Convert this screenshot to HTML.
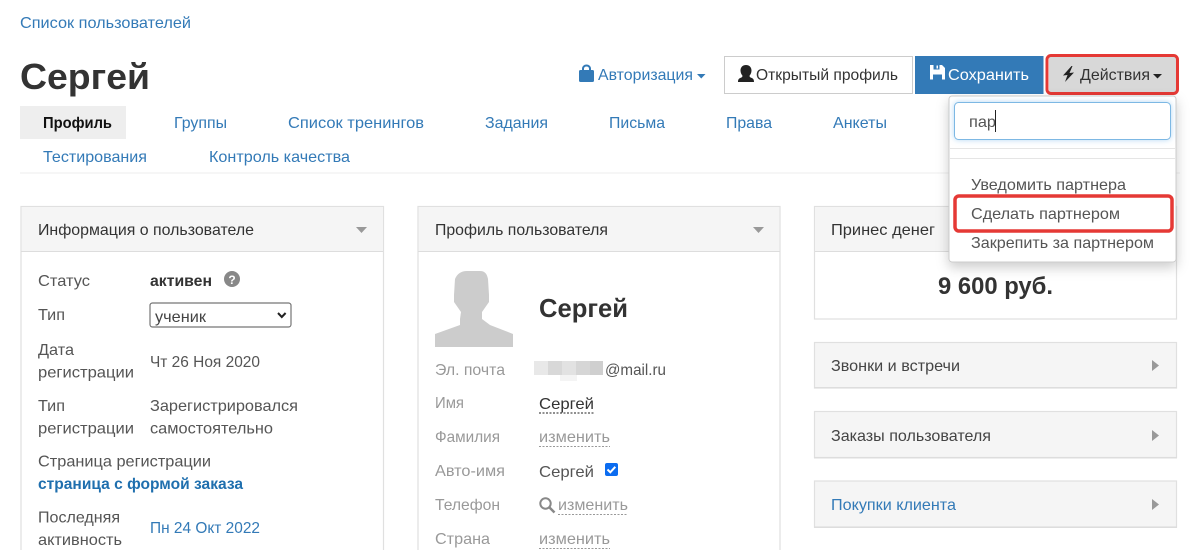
<!DOCTYPE html>
<html lang="ru">
<head>
<meta charset="utf-8">
<title>Сергей</title>
<style>
html,body{margin:0;padding:0;background:#fff;width:1200px;height:550px;overflow:hidden}
svg{display:block}
text{font-family:"Liberation Sans","Noto Sans CJK SC",sans-serif;font-size:16px;fill:#333}
.b{fill:#337ab7}
.g{fill:#999}
.s{fill:#555}
.w{font-weight:bold}
.p{stroke:#e0e0e0;stroke-width:1.2}
</style>
</head>
<body>
<svg width="1200" height="550" viewBox="0 0 1200 550" xmlns="http://www.w3.org/2000/svg">
<defs>
<filter id="sh" x="-20%" y="-20%" width="140%" height="150%"><feDropShadow dx="0" dy="5" stdDeviation="6" flood-color="#000" flood-opacity=".2"/></filter>
<filter id="gl" x="-10%" y="-30%" width="120%" height="160%"><feDropShadow dx="0" dy="0" stdDeviation="3" flood-color="#66afe9" flood-opacity=".5"/></filter>
</defs>

<text x="20" y="28" textLength="171" lengthAdjust="spacingAndGlyphs" class="b">Список пользователей</text>
<text x="20" y="89" textLength="130" lengthAdjust="spacingAndGlyphs" class="w" style="font-size:36px">Сергей</text>

<!-- tabs -->
<rect x="20" y="106" width="106" height="33" fill="#eee"/>
<text x="43" y="128" textLength="69" lengthAdjust="spacingAndGlyphs" class="w" style="fill:#111">Профиль</text>
<text x="174" y="128" textLength="53" lengthAdjust="spacingAndGlyphs" class="b">Группы</text>
<text x="288" y="128" textLength="136" lengthAdjust="spacingAndGlyphs" class="b">Список тренингов</text>
<text x="485" y="128" textLength="63" lengthAdjust="spacingAndGlyphs" class="b">Задания</text>
<text x="609" y="128" textLength="56" lengthAdjust="spacingAndGlyphs" class="b">Письма</text>
<text x="726" y="128" textLength="46" lengthAdjust="spacingAndGlyphs" class="b">Права</text>
<text x="833" y="128" textLength="54" lengthAdjust="spacingAndGlyphs" class="b">Анкеты</text>
<text x="43" y="162" textLength="104" lengthAdjust="spacingAndGlyphs" class="b">Тестирования</text>
<text x="209" y="162" textLength="141" lengthAdjust="spacingAndGlyphs" class="b">Контроль качества</text>
<rect x="20" y="172.500" width="1160" height="1" fill="#eee"/>

<!-- top actions -->
<path d="M579 71.500a1.500 1.500 0 0 1 1.500-1.500h12a1.500 1.500 0 0 1 1.500 1.500v9a1.500 1.500 0 0 1-1.500 1.500h-12a1.500 1.500 0 0 1-1.500-1.500z" fill="#337ab7"/>
<path d="M583 71v-2.500a3.500 3 0 0 1 7 0v2.500" fill="none" stroke="#337ab7" stroke-width="2"/>
<text x="598" y="80" textLength="95" lengthAdjust="spacingAndGlyphs" class="b">Авторизация</text>
<path d="M697 74h8.500l-4.250 4.500z" fill="#337ab7"/>

<rect x="724.500" y="56.500" width="188" height="37" fill="#fff" stroke="#ccc"/>
<path d="M746 65c3.300 0 5.500 2.300 5.500 5.500 0 2.300-1 4-2 5.200 0 1.300 1 1.800 2.300 2.300 1.300.5 2.200 1.500 2.200 4h-16c0-2.500.9-3.500 2.200-4 1.300-.5 2.300-1 2.300-2.300-1-1.200-2-2.900-2-5.200 0-3.200 2.200-5.500 5.500-5.500z" fill="#222"/>
<text x="756" y="80" textLength="142" lengthAdjust="spacingAndGlyphs" style="fill:#333">Открытый профиль</text>

<rect x="915" y="56" width="128.500" height="38" fill="#337ab7"/>
<path d="M930 65h12l3 3v11.500h-15z" fill="#fff"/>
<rect x="933.500" y="65" width="6" height="4.500" fill="#337ab7"/><rect x="936.500" y="65.500" width="1.500" height="3" fill="#fff"/>
<rect x="933" y="74.500" width="9" height="5" fill="#337ab7"/>
<text x="948" y="80" textLength="81" lengthAdjust="spacingAndGlyphs" style="fill:#fff">Сохранить</text>

<rect x="1049" y="57" width="127" height="35" fill="#d8d8d8"/>
<path d="M1071.500 66L1063 75.500l4.500-.5-2.500 7 9-9.500-4.500.5 3-7z" fill="#222"/>
<text x="1080" y="80" textLength="70" lengthAdjust="spacingAndGlyphs" style="fill:#333">Действия</text>
<path d="M1153 74h9l-4.500 4.500z" fill="#222"/>
<rect x="1047" y="55.500" width="130.500" height="38" rx="4" fill="none" stroke="#e53935" stroke-width="3"/>

<!-- left panel -->
<rect x="21" y="206.500" width="362.500" height="360" fill="#fff" class="p"/>
<rect x="21.500" y="207" width="361.500" height="44" fill="#f5f5f5"/>
<rect x="21" y="251" width="362" height="1" fill="#ddd"/>
<text x="38" y="235" textLength="216" lengthAdjust="spacingAndGlyphs">Информация о пользователе</text>
<path d="M356 227h11l-5.500 6z" fill="#999"/>
<text x="38" y="286" textLength="52" lengthAdjust="spacingAndGlyphs" class="s">Статус</text>
<text x="150" y="286" textLength="62" lengthAdjust="spacingAndGlyphs" class="w">активен</text>
<circle cx="232" cy="279" r="8" fill="#888"/>
<text x="232" y="284" text-anchor="middle" class="w" style="font-size:12px;fill:#fff">?</text>
<text x="38" y="320" textLength="27" lengthAdjust="spacingAndGlyphs" class="s">Тип</text>
<rect x="150" y="303" width="141" height="24" rx="2.500" fill="#fff" stroke="#767676" stroke-width="1.200"/>
<text x="155" y="322" textLength="51" lengthAdjust="spacingAndGlyphs" style="fill:#444">ученик</text>
<path d="M278 313l3.800 4 3.800-4" fill="none" stroke="#222" stroke-width="2"/>
<text x="38" y="355" textLength="36" lengthAdjust="spacingAndGlyphs" class="s">Дата</text>
<text x="38" y="377.500" textLength="96" lengthAdjust="spacingAndGlyphs" class="s">регистрации</text>
<text x="150" y="367" textLength="110" lengthAdjust="spacingAndGlyphs" class="s">Чт 26 Ноя 2020</text>
<text x="38" y="411" textLength="27" lengthAdjust="spacingAndGlyphs" class="s">Тип</text>
<text x="38" y="433.500" textLength="96" lengthAdjust="spacingAndGlyphs" class="s">регистрации</text>
<text x="150" y="411" textLength="148" lengthAdjust="spacingAndGlyphs" class="s">Зарегистрировался</text>
<text x="150" y="433.500" textLength="123" lengthAdjust="spacingAndGlyphs" class="s">самостоятельно</text>
<text x="38" y="466.500" textLength="173" lengthAdjust="spacingAndGlyphs" class="s">Страница регистрации</text>
<text x="38" y="489" textLength="205" lengthAdjust="spacingAndGlyphs" class="w" style="fill:#1f6fae">страница с формой заказа</text>
<text x="38" y="522.500" textLength="82" lengthAdjust="spacingAndGlyphs" class="s">Последняя</text>
<text x="38" y="545" textLength="84" lengthAdjust="spacingAndGlyphs" class="s">активность</text>
<text x="150" y="533" textLength="110" lengthAdjust="spacingAndGlyphs" class="b">Пн 24 Окт 2022</text>

<!-- middle panel -->
<rect x="418" y="206.500" width="362" height="360" fill="#fff" class="p"/>
<rect x="418.500" y="207" width="361" height="44" fill="#f5f5f5"/>
<rect x="418" y="251" width="362" height="1" fill="#ddd"/>
<text x="435" y="235" textLength="173" lengthAdjust="spacingAndGlyphs">Профиль пользователя</text>
<path d="M753 227h11l-5.500 6z" fill="#999"/>
<path d="M435 347v-13l25-9v-6l1-7-7-10v-7l1-16c2-5 6-8 12-8h13c5 0 7 3 8 8l1 16v7l-7 10v7l8 6 23 9v13z" fill="#ccc"/>
<text x="539" y="317" textLength="89" lengthAdjust="spacingAndGlyphs" class="w" style="font-size:26px">Сергей</text>
<text x="435" y="375" textLength="70" lengthAdjust="spacingAndGlyphs" class="g">Эл. почта</text>
<g>
<rect x="534" y="361" width="14" height="14" fill="#e8e8e8"/><rect x="548" y="361" width="14" height="14" fill="#d8d8d8"/><rect x="562" y="361" width="14" height="14" fill="#e2e2e2"/><rect x="576" y="361" width="14" height="14" fill="#d6d6d6"/><rect x="590" y="361" width="13" height="14" fill="#cfcfcf"/><rect x="560" y="375" width="17" height="6" fill="#f4f4f4"/>
</g>
<text x="605" y="375" textLength="61" lengthAdjust="spacingAndGlyphs" class="s">@mail.ru</text>
<text x="435" y="408" textLength="29" lengthAdjust="spacingAndGlyphs" class="g">Имя</text>
<text x="539" y="409" textLength="55" lengthAdjust="spacingAndGlyphs">Сергей</text>
<path d="M539 413h55" stroke="#222" stroke-dasharray="2 1.500" fill="none"/>
<text x="435" y="442" textLength="65" lengthAdjust="spacingAndGlyphs" class="g">Фамилия</text>
<text x="539" y="442" textLength="71" lengthAdjust="spacingAndGlyphs" class="g">изменить</text>
<path d="M539 446.500h71" stroke="#999" stroke-dasharray="2 1.500" fill="none"/>
<text x="435" y="476" textLength="70" lengthAdjust="spacingAndGlyphs" class="g">Авто-имя</text>
<text x="539" y="477" textLength="55" lengthAdjust="spacingAndGlyphs" class="s">Сергей</text>
<rect x="605" y="463" width="13" height="13" rx="2" fill="#0b6cf0"/>
<path d="M607.500 469.500l2.800 2.800 5-5.500" fill="none" stroke="#fff" stroke-width="2"/>
<text x="435" y="510" textLength="65" lengthAdjust="spacingAndGlyphs" class="g">Телефон</text>
<circle cx="545.500" cy="503.500" r="5.200" fill="none" stroke="#888" stroke-width="2"/>
<path d="M549.500 507.500l5 5" stroke="#888" stroke-width="2.500"/>
<text x="558" y="510" textLength="70" lengthAdjust="spacingAndGlyphs" class="g">изменить</text>
<path d="M558 514.500h70" stroke="#999" stroke-dasharray="2 1.500" fill="none"/>
<text x="435" y="544" textLength="55" lengthAdjust="spacingAndGlyphs" class="g">Страна</text>
<text x="539" y="544" textLength="71" lengthAdjust="spacingAndGlyphs" class="g">изменить</text>
<path d="M539 548.500h71" stroke="#999" stroke-dasharray="2 1.500" fill="none"/>

<!-- right panels -->
<rect x="814.500" y="206.500" width="362" height="112.500" fill="#fff" class="p"/>
<rect x="815" y="207" width="361" height="44" fill="#f5f5f5"/>
<rect x="815" y="251" width="361" height="1" fill="#ddd"/>
<text x="831" y="235" textLength="104" lengthAdjust="spacingAndGlyphs">Принес денег</text>
<text x="938" y="294" textLength="115" lengthAdjust="spacingAndGlyphs" class="w" style="font-size:24px">9 600 руб.</text>

<rect x="814.500" y="342.500" width="362" height="45.500" fill="#f5f5f5" class="p"/>
<rect x="814" y="387" width="363" height="1.500" fill="#ddd"/>
<text x="831" y="371" textLength="129" lengthAdjust="spacingAndGlyphs" class="s" style="fill:#444">Звонки и встречи</text>
<path d="M1152 360l7 5.500-7 5.500z" fill="#999"/>
<rect x="814.500" y="411.500" width="362" height="46" fill="#f5f5f5" class="p"/>
<rect x="814" y="457" width="363" height="1.500" fill="#ddd"/>
<text x="831" y="441" textLength="160" lengthAdjust="spacingAndGlyphs" class="s" style="fill:#444">Заказы пользователя</text>
<path d="M1152 430l7 5.500-7 5.500z" fill="#999"/>
<rect x="814.500" y="481" width="362" height="46" fill="#f5f5f5" class="p"/>
<rect x="814" y="526.500" width="363" height="1.500" fill="#ddd"/>
<text x="831" y="510" textLength="125" lengthAdjust="spacingAndGlyphs" class="b">Покупки клиента</text>
<path d="M1152 499l7 5.500-7 5.500z" fill="#999"/>

<!-- dropdown -->
<rect x="949" y="96" width="227" height="166" rx="3" fill="#fff" stroke="#ccc" stroke-width="1" filter="url(#sh)"/>
<rect x="954.500" y="102.500" width="216" height="37" rx="4" fill="#fff" stroke="#7db8e4" filter="url(#gl)"/>
<text x="969" y="127" textLength="27" lengthAdjust="spacingAndGlyphs" class="s">пар</text>
<rect x="995" y="110" width="1" height="22" fill="#222"/>
<rect x="950" y="148" width="225" height="1" fill="#e5e5e5"/>
<rect x="950" y="158" width="225" height="1" fill="#e5e5e5"/>
<text x="971" y="190" textLength="155" lengthAdjust="spacingAndGlyphs" class="s">Уведомить партнера</text>
<text x="971" y="219" textLength="149" lengthAdjust="spacingAndGlyphs" class="s">Сделать партнером</text>
<text x="971" y="248" textLength="183" lengthAdjust="spacingAndGlyphs" class="s">Закрепить за партнером</text>
<rect x="955" y="196" width="217" height="35" rx="4" fill="none" stroke="#e53935" stroke-width="3.500"/>
</svg>
</body>
</html>
